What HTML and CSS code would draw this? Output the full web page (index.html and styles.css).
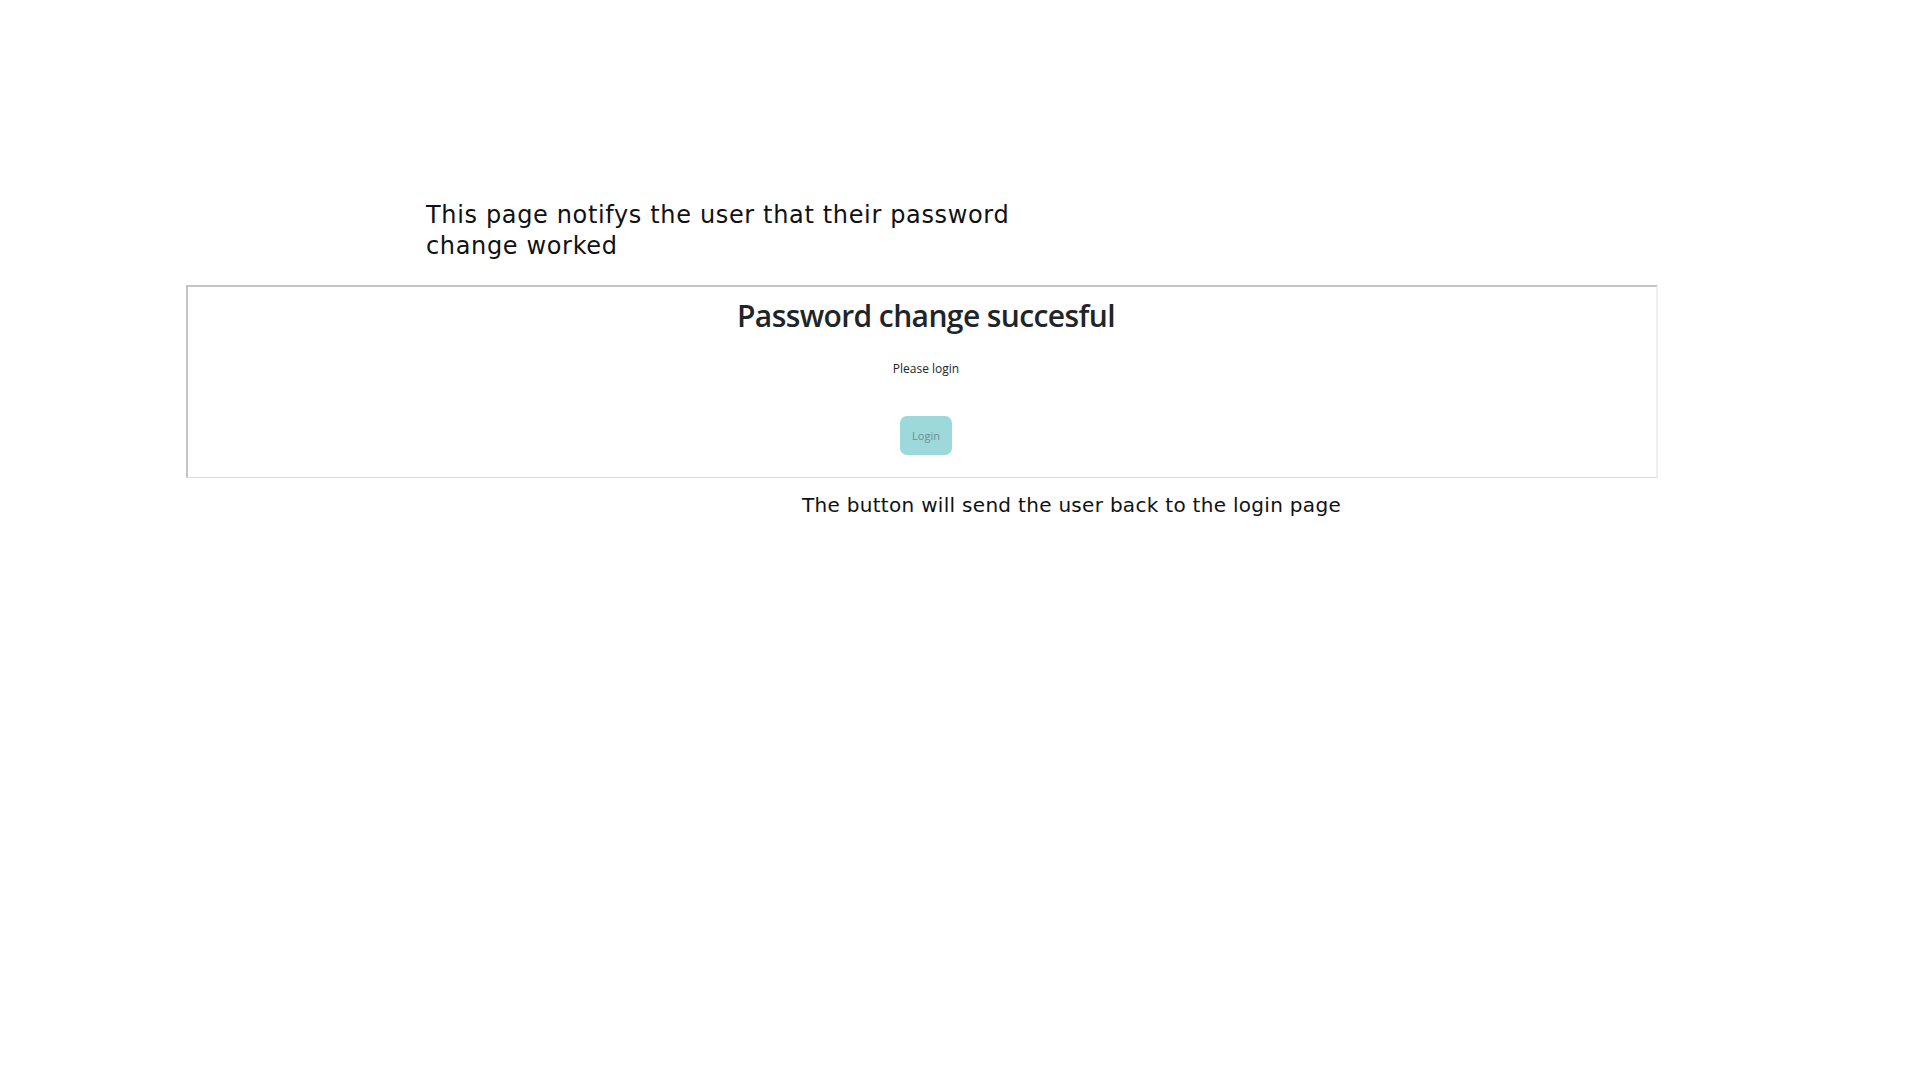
FILE: index.html
```html
<!DOCTYPE html>
<html>
<head>
<meta charset="utf-8">
<link rel="stylesheet" href="styles.css">
</head>
<body>
<div class="page">
  <p class="note note-top">This page notifys the user that their password<br>change worked</p>
  <div class="card">
    <h1 class="title">Password change succesful</h1>
    <p class="sub">Please login</p>
    <button class="btn">Login</button>
  </div>
  <p class="note note-bottom">The button will send the user back to the login page</p>
</div>
</body>
</html>
```
FILE: styles.css
```css
html, body {
  margin: 0;
  padding: 0;
  background: #ffffff;
}
.page {
  padding-top: 200px;
}
.note {
  margin: 0;
  font-family: "DejaVu Sans", sans-serif;
  color: #111;
}
.note-top {
  margin-left: 426px;
  height: 85px;
  font-size: 24px;
  line-height: 31px;
  letter-spacing: 0.65px;
}
.card {
  margin-left: 186px;
  width: 1468px;
  height: 190px;
  padding-left: 8px;
  box-sizing: content-box;
  border-top: 2px solid #c4c4c4;
  border-left: 2px solid #c4c4c4;
  border-right: 2px solid #efefef;
  border-bottom: 1px solid #dcdcdc;
  display: flex;
  flex-direction: column;
  align-items: center;
}
.card {
  width: 1460px;
}
.title {
  margin: 9px 0 0 0;
  font-family: "Open Sans", sans-serif;
  font-weight: 600;
  font-size: 30px;
  letter-spacing: -0.6px;
  line-height: 40px;
  color: #212529;
}
.sub {
  margin: 25px 0 0 0;
  font-family: "Open Sans", sans-serif;
  font-size: 12px;
  line-height: 16px;
  color: #212529;
}
.btn {
  margin-top: 39px;
  width: 52px;
  height: 39px;
  border: none;
  border-radius: 7px;
  background: #9dd8da;
  font-family: "Open Sans", sans-serif;
  font-size: 11px;
  color: #6f8d8f;
  padding: 0;
}
.note-bottom {
  margin-left: 802px;
  margin-top: 14px;
  font-size: 20px;
  line-height: 26px;
  letter-spacing: 0.3px;
}
```
